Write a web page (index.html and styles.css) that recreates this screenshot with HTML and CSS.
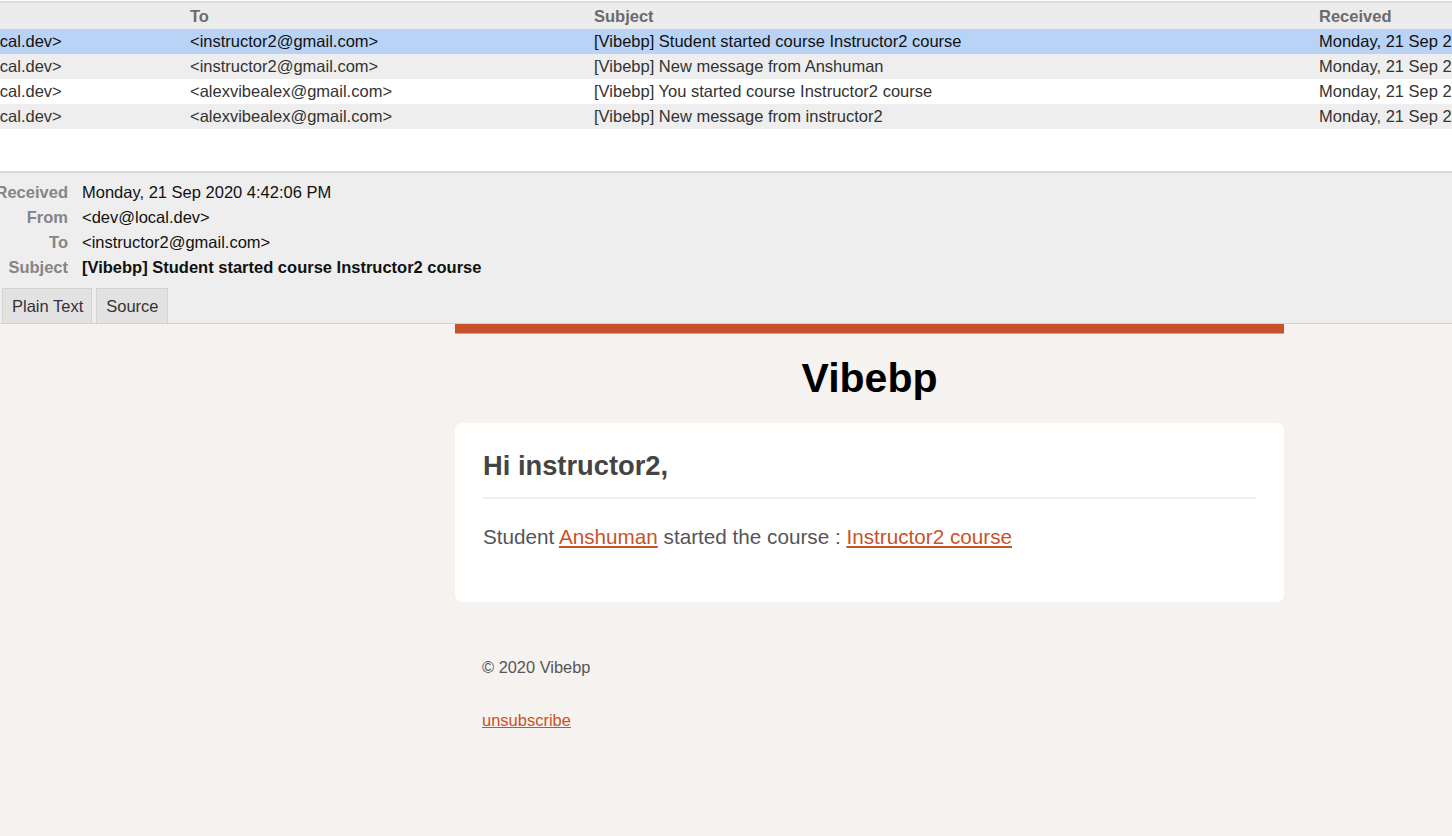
FILE: index.html
```html
<!DOCTYPE html>
<html>
<head>
<meta charset="utf-8">
<title>MailCatcher</title>
<link rel="stylesheet" href="styles.css">
</head>
<body>
<div class="app">
  <section class="list">
    <div class="grid">
      <div class="row head">
        <div class="cell">From</div>
        <div class="cell">To</div>
        <div class="cell">Subject</div>
        <div class="cell">Received</div>
      </div>
      <div class="row selected">
        <div class="cell">&lt;dev@local.dev&gt;</div>
        <div class="cell">&lt;instructor2@gmail.com&gt;</div>
        <div class="cell">[Vibebp] Student started course Instructor2 course</div>
        <div class="cell">Monday, 21 Sep 2020 4:42:06 PM</div>
      </div>
      <div class="row alt">
        <div class="cell">&lt;dev@local.dev&gt;</div>
        <div class="cell">&lt;instructor2@gmail.com&gt;</div>
        <div class="cell">[Vibebp] New message from Anshuman</div>
        <div class="cell">Monday, 21 Sep 2020 4:41:12 PM</div>
      </div>
      <div class="row">
        <div class="cell">&lt;dev@local.dev&gt;</div>
        <div class="cell">&lt;alexvibealex@gmail.com&gt;</div>
        <div class="cell">[Vibebp] You started course Instructor2 course</div>
        <div class="cell">Monday, 21 Sep 2020 4:40:38 PM</div>
      </div>
      <div class="row alt">
        <div class="cell">&lt;dev@local.dev&gt;</div>
        <div class="cell">&lt;alexvibealex@gmail.com&gt;</div>
        <div class="cell">[Vibebp] New message from instructor2</div>
        <div class="cell">Monday, 21 Sep 2020 4:39:51 PM</div>
      </div>
    </div>
  </section>

  <section class="details">
    <dl class="meta">
      <dt>Received</dt><dd>Monday, 21 Sep 2020 4:42:06 PM</dd>
      <dt>From</dt><dd>&lt;dev@local.dev&gt;</dd>
      <dt>To</dt><dd>&lt;instructor2@gmail.com&gt;</dd>
      <dt>Subject</dt><dd class="strong">[Vibebp] Student started course Instructor2 course</dd>
    </dl>
    <nav class="tabs">
      <span class="tab">Plain Text</span>
      <span class="tab">Source</span>
    </nav>
  </section>

  <section class="preview">
    <div class="mail">
      <div class="bar"></div>
      <h1 class="brand">Vibebp</h1>
      <div class="card">
        <h2 class="greet">Hi instructor2,</h2>
        <p class="msg">Student <a href="#">Anshuman</a> started the course : <a href="#">Instructor2 course</a></p>
      </div>
      <div class="foot">
        <p class="copy">© 2020 Vibebp</p>
        <p><a href="#">unsubscribe</a></p>
      </div>
    </div>
  </section>
</div>
</body>
</html>
```
FILE: styles.css
```css
* { box-sizing: border-box; }
html, body {
  margin: 0;
  padding: 0;
  width: 1452px;
  height: 836px;
  overflow: hidden;
  font-family: "Liberation Sans", Arial, Helvetica, sans-serif;
  background: #f5f2ef;
}
.app { display: flex; flex-direction: column; height: 836px; }

/* message list */
.list {
  height: 173px;
  flex: none;
  background: #fff;
  padding-top: 1px;
  border-bottom: 2px solid #d9d9d9;
  overflow: hidden;
}
.grid {
  margin-left: -74px;
  border-top: 2px solid #dcdcdc;
}
.row {
  display: grid;
  grid-template-columns: 256px 404px 725px 1fr;
  height: 25px;
  line-height: 25px;
  font-size: 16.5px;
  color: #333;
  white-space: nowrap;
}
.row .cell { padding-left: 8px; overflow: hidden; }
.row.head { background: #ececec; color: #6b6b6b; font-weight: bold; height: 26px; line-height: 26px; }
.row.selected { background: #b9d3f7; color: #111; }
.row.alt { background: #eeeeee; }

/* details */
.details {
  flex: none;
  background: #eeeeee;
  padding-top: 7px;
  border-bottom: 1px solid #d2d2d2;
}
.meta {
  margin: 0;
  display: grid;
  grid-template-columns: 68px 1fr;
  column-gap: 14px;
  font-size: 16.5px;
  line-height: 25px;
}
.meta dt { text-align: right; color: #858585; font-weight: bold; white-space: nowrap; direction: rtl; }
.meta dd { margin: 0; color: #111; }
.meta dd.strong { font-weight: bold; }
.tabs {
  display: flex;
  gap: 4px;
  padding-left: 2px;
  margin-top: 8px;
  height: 35px;
}
.tab {
  display: flex;
  align-items: center;
  padding: 0 8px 0 9px;
  font-size: 16.5px;
  color: #333;
  background: #e2e2e2;
  border: 1px solid #d3d3d3;
  border-bottom: none;
  height: 35px;
  white-space: nowrap;
  flex: none;
}

/* preview */
.preview { flex: 1; background: #f5f2ef; }
.mail { width: 829px; margin-left: 455px; }
.bar { height: 10px; background: #c8532a; border-bottom: 1px solid #e39b80; }
.brand {
  margin: 19px 0 20px;
  text-align: center;
  font-size: 41px;
  line-height: 50px;
  font-weight: bold;
  color: #000;
}
.card {
  background: #fff;
  border-radius: 7px;
  padding: 27px 28px 50px;
  height: 179px;
}
.greet {
  margin: 0;
  font-size: 27.3px;
  line-height: 32px;
  font-weight: bold;
  color: #444;
  padding-bottom: 15px;
  border-bottom: 2px solid #eeeeee;
}
.msg {
  margin: 23px 0 0;
  font-size: 20.7px;
  line-height: 30px;
  color: #555;
}
a { color: #c8532a; text-decoration: underline; }
.foot { padding-left: 27px; padding-top: 55px; }
.foot p { margin: 0; font-size: 16.4px; line-height: 20px; color: #555; }
.foot p.copy { margin-bottom: 33px; }
.foot a { font-size: 16.5px; }
```
